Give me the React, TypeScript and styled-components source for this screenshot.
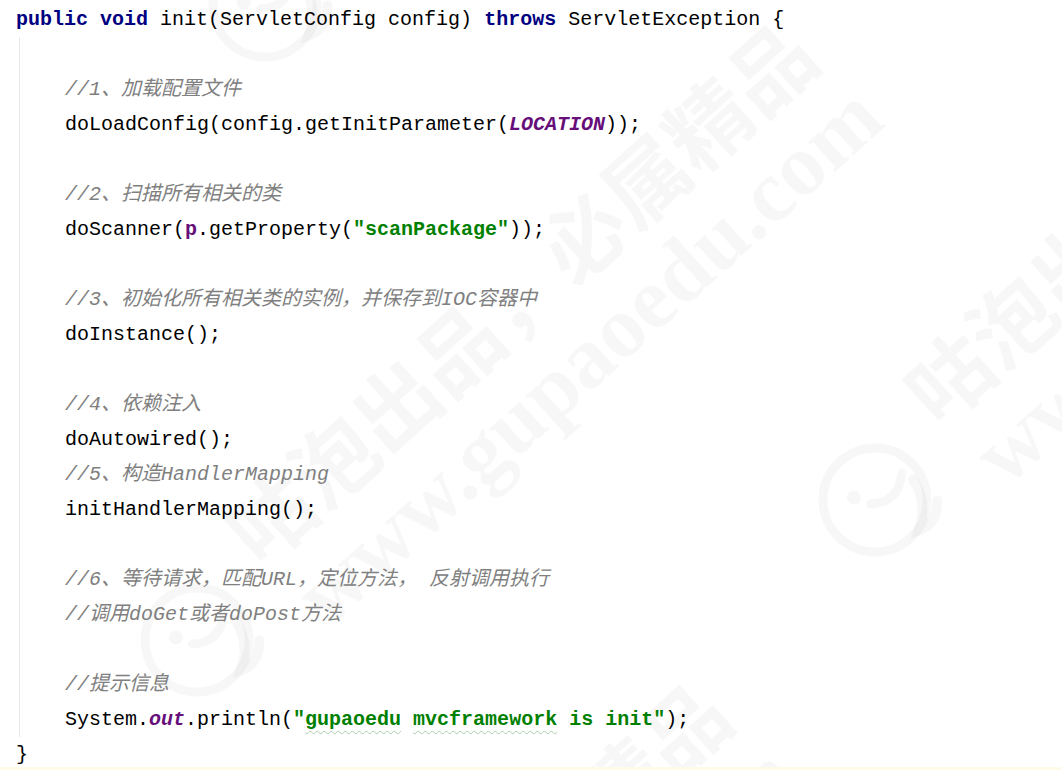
import React from "react";
import styled, { createGlobalStyle } from "styled-components";

const Global = createGlobalStyle`
  html, body {
    margin: 0;
    padding: 0;
    background: #ffffff;
  }
  body {
    width: 1062px;
    height: 770px;
    overflow: hidden;
  }
`;

const Page = styled.div`
  position: relative;
  width: 1062px;
  height: 770px;
  overflow: hidden;
  background: #ffffff;
  display: flex;
  flex-direction: column;
`;

const Watermark = styled.div`
  position: absolute;
  inset: 0;
  overflow: hidden;
  pointer-events: none;
  z-index: 0;
`;

const Tile = styled.div<{ $x: number; $y: number }>`
  position: absolute;
  left: ${(p) => p.$x}px;
  top: ${(p) => p.$y}px;
  width: 0;
  height: 0;
  transform: rotate(-42deg);
  transform-origin: 0 0;
  color: rgba(0, 0, 0, 0.03);
`;

const LogoMark = styled.svg`
  position: absolute;
  left: -62px;
  top: -62px;
  width: 124px;
  height: 124px;
`;

const WmSlogan = styled.div`
  position: absolute;
  left: 95px;
  top: -89px;
  font-family: "Noto Sans CJK SC", sans-serif;
  font-weight: 700;
  font-size: 84px;
  line-height: 88px;
  white-space: nowrap;
`;

const WmUrl = styled.div`
  position: absolute;
  left: 105px;
  top: 6px;
  font-family: "Liberation Serif", serif;
  font-weight: 700;
  font-size: 88px;
  line-height: 88px;
  white-space: nowrap;
`;

const Editor = styled.div`
  position: relative;
  z-index: 1;
  padding: 2px 0 0 16px;
  font-family: "Liberation Mono", "Noto Sans CJK SC", monospace;
  font-size: 20px;
  color: #000000;
  display: flex;
  flex-direction: column;
  flex: 1;
`;

const Line = styled.div<{ $h?: number }>`
  height: ${(p) => p.$h ?? 35}px;
  line-height: 35px;
  white-space: pre;
`;

const Body = styled.div`
  margin-left: 3px;
  border-left: 1px solid #e8e8e8;
  padding-left: 45px;
  display: flex;
  flex-direction: column;
`;

const CaretRow = styled.div`
  flex: 1;
  margin-left: -16px;
  background: #fefbe8;
`;

const Keyword = styled.span`
  color: #000080;
  font-weight: bold;
`;

const Comment = styled.span`
  color: #808080;
  font-style: italic;
`;

const Str = styled.span`
  color: #008000;
  font-weight: bold;
`;

const Field = styled.span<{ $static?: boolean }>`
  color: #660e7a;
  font-weight: bold;
  font-style: ${(p) => (p.$static ? "italic" : "normal")};
`;

const Typo = styled.span`
  text-decoration-line: underline;
  text-decoration-style: wavy;
  text-decoration-color: rgba(110, 170, 110, 0.55);
  text-decoration-thickness: 1px;
  text-underline-offset: 5px;
`;

const tiles = [
  { x: 197, y: 640 },
  { x: 875, y: 500 },
  { x: 265, y: 5 },
  { x: 111, y: 1300 },
];

function Logo() {
  return (
    <LogoMark viewBox="0 0 124 124" fill="none" stroke="currentColor">
      <circle cx="62" cy="62" r="52" strokeWidth="9" />
      <circle cx="48" cy="46" r="7" fill="currentColor" stroke="none" />
      <path d="M56 62 Q78 80 100 60" strokeWidth="9" strokeLinecap="round" />
      <path d="M104 72 Q100 100 74 114 Q92 122 108 104" strokeWidth="10" strokeLinecap="round" />
    </LogoMark>
  );
}

export default function App() {
  return (
    <>
      <Global />
      <Page>
        <Watermark>
          {tiles.map((t, i) => (
            <Tile key={i} $x={t.x} $y={t.y}>
              <Logo />
              <WmSlogan>咕泡出品，必属精品</WmSlogan>
              <WmUrl>www.gupaoedu.com</WmUrl>
            </Tile>
          ))}
        </Watermark>
        <Editor>
          <Line>
            <Keyword>public</Keyword> <Keyword>void</Keyword> init(ServletConfig config){" "}
            <Keyword>throws</Keyword> ServletException {"{"}
          </Line>
          <Body>
            <Line />
            <Line>
              <Comment>//1、加载配置文件</Comment>
            </Line>
            <Line>
              doLoadConfig(config.getInitParameter(<Field $static>LOCATION</Field>));
            </Line>
            <Line />
            <Line>
              <Comment>//2、扫描所有相关的类</Comment>
            </Line>
            <Line>
              doScanner(<Field>p</Field>.getProperty(<Str>"scanPackage"</Str>));
            </Line>
            <Line />
            <Line>
              <Comment>//3、初始化所有相关类的实例，并保存到IOC容器中</Comment>
            </Line>
            <Line>doInstance();</Line>
            <Line />
            <Line>
              <Comment>//4、依赖注入</Comment>
            </Line>
            <Line>doAutowired();</Line>
            <Line>
              <Comment>//5、构造HandlerMapping</Comment>
            </Line>
            <Line>initHandlerMapping();</Line>
            <Line />
            <Line>
              <Comment>//6、等待请求，匹配URL，定位方法， 反射调用执行</Comment>
            </Line>
            <Line>
              <Comment>//调用doGet或者doPost方法</Comment>
            </Line>
            <Line />
            <Line>
              <Comment>//提示信息</Comment>
            </Line>
            <Line>
              System.<Field $static>out</Field>.println(
              <Str>
                "<Typo>gupaoedu</Typo> <Typo>mvcframework</Typo> is init"
              </Str>
              );
            </Line>
          </Body>
          <Line $h={30}>{"}"}</Line>
          <CaretRow />
        </Editor>
      </Page>
    </>
  );
}
